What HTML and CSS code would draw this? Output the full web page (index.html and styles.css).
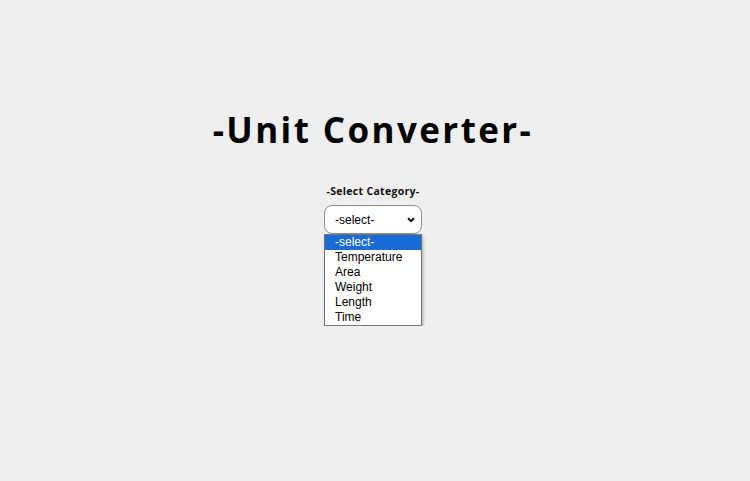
FILE: index.html
```html
<!DOCTYPE html>
<html>
<head>
<meta charset="utf-8">
<link rel="stylesheet" href="styles.css">
</head>
<body>
<main class="page">
  <h1 class="title">-Unit Converter-</h1>
  <div class="label">-Select Category-</div>
  <div class="picker">
    <div class="select">
      <span class="select-value">-select-</span>
      <svg class="chev" width="8" height="6" viewBox="0 0 8 6"><path d="M1 1.2 L4 4.2 L7 1.2" fill="none" stroke="#111" stroke-width="2"/></svg>
    </div>
    <div class="listbox">
      <div class="opt active">-select-</div>
      <div class="opt">Temperature</div>
      <div class="opt">Area</div>
      <div class="opt">Weight</div>
      <div class="opt">Length</div>
      <div class="opt">Time</div>
    </div>
  </div>
</main>
</body>
</html>
```

FILE: styles.css
```css
html, body {
  margin: 0;
  padding: 0;
  background: #efefef;
}
.page {
  display: flex;
  flex-direction: column;
  align-items: center;
  padding: 104px 4px 0 0;
  font-family: "Open Sans", "DejaVu Sans", sans-serif;
}
.title {
  margin: 0;
  font-size: 35px;
  font-weight: 700;
  color: #000;
  line-height: 52px;
  letter-spacing: 2.4px;
}
.label {
  margin-top: 28px;
  font-size: 10.5px;
  font-weight: 700;
  color: #111;
  line-height: 14px;
  letter-spacing: 0.3px;
}
.picker {
  display: flex;
  flex-direction: column;
  margin-top: 7px;
  width: 98px;
}
.select {
  box-sizing: border-box;
  width: 98px;
  height: 29px;
  border: 1px solid #8f8f8f;
  border-radius: 8px;
  background: #fff;
  display: flex;
  align-items: center;
  justify-content: space-between;
  padding: 0 6px 0 10px;
  font-family: "Liberation Sans", Arial, sans-serif;
  font-size: 12px;
  color: #000;
}
.chev {
  margin-top: 1px;
}
.listbox {
  box-sizing: border-box;
  width: 98px;
  background: #fff;
  border: 1px solid #767676;
  box-shadow: 1px 2px 3px rgba(0,0,0,0.3);
  font-family: "Liberation Sans", Arial, sans-serif;
  font-size: 12px;
  color: #000;
}
.opt {
  height: 15px;
  line-height: 15px;
  padding-left: 10px;
}
.opt.active {
  background: #1a6bd6;
  color: #fff;
}
```
